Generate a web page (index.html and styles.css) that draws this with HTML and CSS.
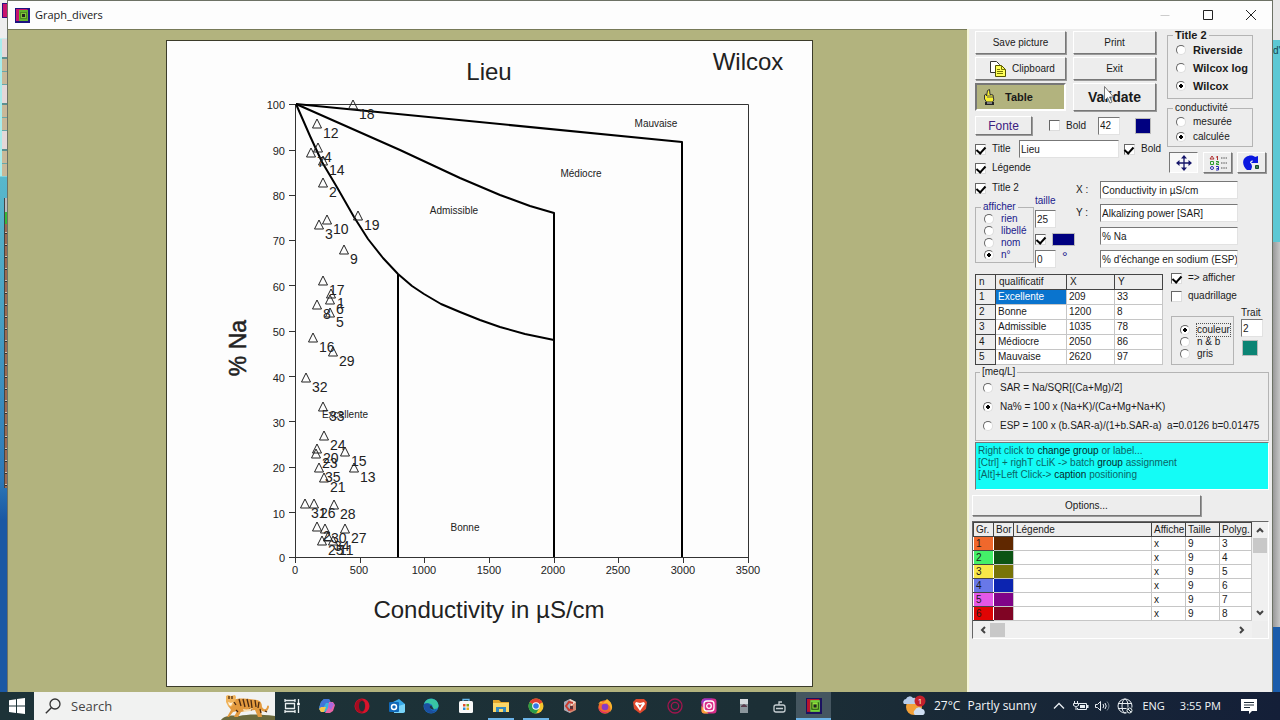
FILE: index.html
```html
<!DOCTYPE html>
<html lang="fr">
<head>
<meta charset="utf-8">
<title>Graph_divers</title>
<link rel="stylesheet" href="styles.css">
</head>
<body>
<div class="desktop">
  <div class="edge edge-left"><i class="edge-icon"></i><i class="cells-top"></i><i class="cells-low"></i></div>
  <div class="window">
    <header class="titlebar">
      <svg class="app-icon" viewBox="0 0 15 15"><rect width="15" height="15" fill="#1b1280"/><path d="M1 1h12L1 13z" fill="#c8146e"/><path d="M1 1h3v12H1z" fill="#c8146e"/><rect x="4" y="2" width="9" height="11" fill="#62b42c"/><rect x="5" y="4" width="7" height="7" fill="#4d8b22"/><rect x="6" y="5" width="5" height="5" fill="#82c43c"/><rect x="7" y="6" width="3" height="3" fill="#222"/></svg>
      <h1>Graph_divers</h1>
      <div class="win-buttons">
        <button aria-label="Minimize" class="dim"><svg viewBox="0 0 10 10"><path d="M0.500 5.500h9"/></svg></button>
        <button aria-label="Maximize"><svg viewBox="0 0 10 10"><path d="M.5.5h9v9h-9z"/></svg></button>
        <button aria-label="Close"><svg viewBox="0 0 10 10"><path d="M0 0l10 10M10 0L0 10"/></svg></button>
      </div>
    </header>
    <div class="content">
      <main class="canvas">
        <svg class="paper" viewBox="167 41 645 645" role="img" aria-label="Wilcox">
          <g class="axis">
            <path d="M295.500 104.500H748.500V557.500H295.500z"/>
            <path d="M289 104.500h6M289 150.500h6M289 195.500h6M289 240.500h6M289 285.500h6M289 331.500h6M289 376.500h6M289 421.500h6M289 467.500h6M289 512.500h6M289 557.500h6"/>
            <path d="M295.500 557v6M360.500 557v6M424.500 557v6M489.500 557v6M554.500 557v6M618.500 557v6M683.500 557v6M748.500 557v6"/>
          </g>
          <g class="bound">
            <path d="M296 104L682 142V557"/>
            <path d="M296 104L400 150L460 178L500 195L530 206L554 213V557"/>
            <path d="M296 104L310 136L322 162L338 189L354 217L368 239L383 258L398 274L412 286L424 294L441 304L460 312L480 320L500 327L525 334L554 340"/>
            <path d="M398 274V557"/>
          </g>
          <g class="ticks yt">
            <text x="285" y="109">100</text><text x="285" y="155">90</text><text x="285" y="200">80</text><text x="285" y="245">70</text><text x="285" y="291">60</text><text x="285" y="336">50</text><text x="285" y="382">40</text><text x="285" y="427">30</text><text x="285" y="472">20</text><text x="285" y="518">10</text><text x="285" y="562">0</text>
          </g>
          <g class="ticks xt">
            <text x="295" y="574">0</text><text x="359" y="574">500</text><text x="424" y="574">1000</text><text x="489" y="574">1500</text><text x="553" y="574">2000</text><text x="618" y="574">2500</text><text x="683" y="574">3000</text><text x="748" y="574">3500</text>
          </g>
          <g class="zones">
            <text x="656" y="127">Mauvaise</text><text x="581" y="177">Médiocre</text><text x="454" y="214">Admissible</text><text x="345" y="418">Excellente</text><text x="465" y="531">Bonne</text>
          </g>
          <g class="titles">
            <text x="489" y="80">Lieu</text><text x="748" y="70">Wilcox</text>
            <text x="489" y="618">Conductivity in µS/cm</text>
            <text class="side-title" transform="translate(246 348) rotate(-90)">% Na</text>
          </g>
          <g class="points" id="points"></g>
        </svg>
      </main>
      <aside class="panel">
        <section class="top">
          <div class="left">
            <div class="buttons">
              <button class="btn">Save picture</button><button class="btn">Print</button>
              <button class="btn with-icon"><svg width="16" height="16" viewBox="0 0 16 16"><path d="M.5.5h6l3 3v8h-9z" fill="#fff" stroke="#333"/><path d="M5.500 4.500h6l4 4v7h-10z" fill="#ffff58" stroke="#555500"/><path d="M11.500 4.500v4h4M7 8.500h3M7 10.500h6M7 12.500h6" fill="none" stroke="#777700"/></svg>Clipboard</button><button class="btn">Exit</button>
              <button class="btn tall pressed"><svg width="12" height="16" viewBox="0 0 12 16"><path d="M4.500 1.500l2-1 .5 5 3 .5.800 5-1.300 2h-6l-2-3v-4l1.500-1 .5 2z" fill="#f8f030" stroke="#333"/><path d="M5 6v3M7 6v3M9 7v2" stroke="#555"/><path d="M2 13h9v3H2z" fill="#222"/><path d="M4 14h5" stroke="#ddd"/></svg>Table</button>
              <button class="btn tall strong">Validate<svg class="pointer" width="10" height="18" viewBox="0 0 10 18"><path d="M.5.5v14l3-3 2.500 5.500 2-1-2.500-5h4z" fill="#fff" stroke="#777"/></svg></button>
            </div>
            <div class="row font-row">
              <button class="btn fonte">Fonte</button>
              <label class="check"><input type="checkbox">Bold</label>
              <input class="field size" value="42" aria-label="Taille de fonte">
              <button class="swatch navy" aria-label="Couleur"></button>
            </div>
            <div class="row title-row">
              <label class="check"><input type="checkbox" checked>Title</label>
              <input class="field" value="Lieu" aria-label="Title">
              <label class="check"><input type="checkbox" checked>Bold</label>
            </div>
            <label class="check legend-row"><input type="checkbox" checked>Légende</label>
          </div>
          <div class="right">
            <fieldset class="type"><legend>Title 2</legend>
              <label><input type="radio" name="type">Riverside</label>
              <label><input type="radio" name="type">Wilcox log</label>
              <label><input type="radio" name="type" checked>Wilcox</label>
            </fieldset>
            <fieldset class="cond"><legend>conductivité</legend>
              <label><input type="radio" name="cond">mesurée</label>
              <label><input type="radio" name="cond" checked>calculée</label>
            </fieldset>
            <div class="tools">
              <button class="btn on" aria-label="Déplacer"><svg width="16" height="16" viewBox="0 0 16 16"><path d="M8 2v12M2 8h12" stroke="#16166a" stroke-width="1.300"/><path d="M8 0l3 3.500H5zM8 16l3-3.500H5zM0 8l3.500-3v6zM16 8l-3.500-3v6z" fill="#16166a"/></svg></button>
              <button class="btn" aria-label="Liste"><svg width="18" height="16" viewBox="0 0 18 16"><path d="M3 1l2 3H1z" fill="none" stroke="#b03030"/><path d="M1.500 6.500h3v3h-3z" fill="none" stroke="#2c9a2c"/><circle cx="3" cy="13" r="1.500" fill="none" stroke="#2c2cb0"/><path d="M8.500 1v4M7 2h1" stroke="#b03030" fill="none"/><path d="M7 6.500h2.500v1.500H7.500v1.500H10" stroke="#2c9a2c" fill="none"/><path d="M7 11.500h2.500v3.500H7M7.500 13.500h2" stroke="#2c2cb0" fill="none"/><path d="M12 3h6M12 8h6M12 13h6" stroke="#555" stroke-dasharray="1.500 .8"/></svg></button>
              <button class="btn" aria-label="Rotation"><svg width="17" height="16" viewBox="0 0 17 16"><path d="M4 15C-1 11-1 4 3 2c3-2 7-2 9 0l3-1 0 7H8l2-2C9 5 7 6 7 8c1 0 2 2 2 4l-1 3z" fill="#0a18e0"/><path d="M12.500 10.500h3v3h-3z" fill="#3c8058" stroke="#184828"/></svg></button>
            </div>
          </div>
        </section>
        <section class="labels">
          <div class="label-opts">
            <label class="check"><input type="checkbox" checked>Title 2</label>
            <fieldset class="show"><legend>afficher</legend>
              <label><input type="radio" name="show">rien</label>
              <label><input type="radio" name="show">libellé</label>
              <label><input type="radio" name="show">nom</label>
              <label><input type="radio" name="show" checked>n°</label>
            </fieldset>
          </div>
          <div class="taille">
            <label for="taille">taille</label>
            <input class="field" id="taille" value="25">
            <div class="pair"><input type="checkbox" checked aria-label="Couleur des étiquettes"><button class="swatch navy flat" aria-label="Couleur étiquette"></button></div>
            <div class="pair"><input class="field" id="angle" value="0"><label for="angle" class="deg">°</label></div>
          </div>
          <div class="names">
            <label for="x">X :</label><input class="field" id="x" value="Conductivity in µS/cm">
            <label for="y">Y :</label><input class="field" id="y" value="Alkalizing power [SAR]">
            <input class="field" value="% Na" aria-label="Na">
            <input class="field" value="% d'échange en sodium (ESP)" aria-label="ESP">
          </div>
        </section>
        <section class="quali">
          <table class="grid">
            <thead><tr><th class="c1">n</th><th class="c2">qualificatif</th><th>X</th><th>Y</th></tr></thead>
            <tbody>
              <tr><th>1</th><td class="sel">Excellente</td><td>209</td><td>33</td></tr>
              <tr><th>2</th><td>Bonne</td><td>1200</td><td>8</td></tr>
              <tr><th>3</th><td>Admissible</td><td>1035</td><td>78</td></tr>
              <tr><th>4</th><td>Médiocre</td><td>2050</td><td>86</td></tr>
              <tr><th>5</th><td>Mauvaise</td><td>2620</td><td>97</td></tr>
            </tbody>
          </table>
          <div class="quali-opts">
            <label class="check"><input type="checkbox" checked>=&gt; afficher</label>
            <label class="check"><input type="checkbox">quadrillage</label>
            <div class="color-row">
              <fieldset class="mode">
                <label><input type="radio" name="mode" checked><span class="focus">couleur</span></label>
                <label><input type="radio" name="mode">n &amp; b</label>
                <label><input type="radio" name="mode">gris</label>
              </fieldset>
              <div class="trait"><label for="trait">Trait</label><input class="field" id="trait" value="2"><button class="swatch teal" aria-label="Couleur du trait"></button></div>
            </div>
          </div>
        </section>
        <fieldset class="formula"><legend>[meq/L]</legend>
          <label><input type="radio" name="f">SAR = Na/SQR[(Ca+Mg)/2]</label>
          <label><input type="radio" name="f" checked>Na% = 100 x (Na+K)/(Ca+Mg+Na+K)</label>
          <label><input type="radio" name="f">ESP = 100 x (b.SAR-a)/(1+b.SAR-a)&nbsp; a=0.0126 b=0.01475</label>
        </fieldset>
        <p class="hint">Right click to <span>change group</span> or label...<br>[Ctrl] + righT cLiK -&gt; batch <span>group</span> assignment<br>[Alt]+Left Click-&gt; <span>caption</span> positioning</p>
        <button class="btn options">Options...</button>
        <div class="groups">
          <table>
            <thead><tr><th class="g1">Gr.</th><th class="g2">Bor</th><th>Légende</th><th class="g4">Affiche</th><th class="g5">Taille</th><th class="g6">Polyg.</th></tr></thead>
            <tbody>
              <tr><th class="a1">1</th><td class="b1"></td><td></td><td>x</td><td>9</td><td>3</td></tr>
              <tr><th class="a2">2</th><td class="b2"></td><td></td><td>x</td><td>9</td><td>4</td></tr>
              <tr><th class="a3">3</th><td class="b3"></td><td></td><td>x</td><td>9</td><td>5</td></tr>
              <tr><th class="a4">4</th><td class="b4"></td><td></td><td>x</td><td>9</td><td>6</td></tr>
              <tr><th class="a5">5</th><td class="b5"></td><td></td><td>x</td><td>9</td><td>7</td></tr>
              <tr><th class="a6">6</th><td class="b6"></td><td></td><td>x</td><td>9</td><td>8</td></tr>
            </tbody>
          </table>
          <div class="vbar"><svg viewBox="0 0 8 6"><path d="M1 5l3-3 3 3"/></svg><i></i><svg viewBox="0 0 8 6"><path d="M1 1l3 3 3-3"/></svg></div>
          <div class="hbar"><svg viewBox="0 0 6 8"><path d="M5 1L2 4l3 3"/></svg><i></i><svg viewBox="0 0 6 8"><path d="M1 1l3 3-3 3"/></svg></div>
        </div>
      </aside>
    </div>
  </div>
  <div class="edge edge-right"><i class="e1"></i><i class="e2">d'</i><i class="e3"></i></div>
</div>
<footer class="taskbar">
  <button class="start" aria-label="Start"><svg width="16" height="16" viewBox="0 0 16 16"><path d="M0 2.200L7 1.200V7.600H0zM8 1.100L16 0V7.600H8zM0 8.500h7v6.400L0 13.900zM8 8.500h8V16L8 14.900z" fill="#fff"/></svg></button>
  <label class="search"><svg width="16" height="16" viewBox="0 0 16 16"><circle cx="10" cy="6" r="5" fill="none" stroke="#333" stroke-width="1.300"/><path d="M6.300 9.700L.8 15.200" stroke="#333" stroke-width="1.400"/></svg><input placeholder="Search" aria-label="Search">
    <svg class="tiger" width="56" height="26" viewBox="0 0 56 26"><path d="M2 26c4-5 12-5 18-4 10-2 20-2 36 0v4z" fill="#6b6a3d"/><path d="M14 6c8-3 18-1 24 0 4 1 5 4 5 7 2 3 4 3 5 0 0-2 2-2 2 0-1 5-5 6-8 3l1 7h-4l-3-7-9 1-5 1-3 5h-4l3-6-4 1-4 5H8l4-7c-1-2-2-3-3-4z" fill="#e39a3e"/><path d="M7 2l2-1 3 1 4-1 1 2-1 6-4 4-3-1-2-4z" fill="#f0b45c"/><path d="M9 8l3 1 2-1-2 4-2-1z" fill="#fff3dc"/><path d="M20 5l2 7M24 5l2 8M28 5l2 8M32 6l1 8M36 6l1 7M40 8l-1 6M10 2v3M13 2v3M17 16l2 2M30 15l3 1M46 17l2 1M15 8l2 3M41 15l1 4" stroke="#4b2a12" stroke-width="1.300"/><path d="M24 15c4 1 7 0 10-1l-3 3-6 1z" fill="#f8dfb4"/></svg></label>
  <nav class="apps">
    <button aria-label="Task view"><svg viewBox="0 0 16 16"><path d="M1 1v3M11 1v3M1 2.500h10M1 15v-3M11 15v-3M1 13.500h10M1.500 5.500h9v5h-9zM14.500 1v4M14.500 8v7" fill="none" stroke="#e8eeee" stroke-width="1.300"/><circle cx="14.500" cy="6" r="1.500" fill="#fff"/></svg></button>
    <button aria-label="Copilot"><svg viewBox="0 0 16 16"><path d="M5 1h5l2 4-4 8-2 1H2L0 10l2-6z" fill="#3bb4dd"/><path d="M5 1h5l2 4H7L3 12 0 10l2-6z" fill="#4374d8"/><path d="M10 4h4l2 3-2 6-3 2H6l3-5z" fill="#e965a7"/><path d="M2 9h5l-2 5H2L0 11z" fill="#f3c64c"/><path d="M9 8l3-4 3 2-3 6z" fill="#a868e0"/></svg></button>
    <button aria-label="Opera"><svg viewBox="0 0 16 16"><circle cx="8" cy="8" r="7.500" fill="#d8142c"/><path d="M8 1a7 7 0 0 0 0 14 9 9 0 0 0 0-14" fill="#a50c20"/><ellipse cx="8" cy="8" rx="3" ry="5.300" fill="#1d3035"/></svg></button>
    <button aria-label="Outlook"><svg viewBox="0 0 16 16"><path d="M4 4l6-3 6 5v8l-2 1H5z" fill="#37a8e8"/><path d="M6 9l10-3v8l-2 1H5z" fill="#78d3f7"/><rect y="4" width="10" height="10" rx="1" fill="#1068b8"/><circle cx="5" cy="9" r="2.500" fill="none" stroke="#fff" stroke-width="1.500"/></svg></button>
    <button aria-label="Edge"><svg viewBox="0 0 16 16"><circle cx="8" cy="8" r="7.500" fill="#1676c8"/><path d="M1 6c2-7 13-7 14.500 1 .5 3-2 4-5 4l-1-2c1-3-5-5-8.500-3z" fill="#39c5a4"/><path d="M1 6c4-2 7 0 6 3 0 3 3 5 7 3-3 5-12 4-13-3z" fill="#1c4fa0"/><path d="M8 7c-3 2 0 6 6 4l-3 .5z" fill="#22343c"/></svg></button>
    <button aria-label="Store"><svg viewBox="0 0 16 16"><path d="M5 4V1.500h6V4" fill="none" stroke="#65b8ec" stroke-width="1.300"/><rect x="1" y="3" width="14" height="12" rx="1.500" fill="#f8f8f8"/><path d="M5 6h2.500v2.500H5z" fill="#e05030"/><path d="M8.500 6H11v2.500H8.500z" fill="#78a820"/><path d="M5 9.500h2.500V12H5z" fill="#2890d8"/><path d="M8.500 9.500H11V12H8.500z" fill="#e8b020"/></svg></button>
    <button class="open" aria-label="Explorer"><svg viewBox="0 0 16 16"><path d="M0 2h6l2 2h8v10H0z" fill="#e3a62c"/><path d="M0 5h16v9H0z" fill="#fbd769"/><path d="M3 14V9h10v5h-3v-3H6v3z" fill="#348ac0"/></svg></button>
    <button class="open" aria-label="Chrome"><svg viewBox="0 0 16 16"><circle cx="8" cy="8" r="7.500" fill="#f5c52d"/><path d="M8 8L1.500 4.200a7.500 7.500 0 0 1 13 0z" fill="#e04030"/><path d="M8 8L1.500 4.200A7.500 7.500 0 0 0 8 15.500l3-5z" fill="#299d48"/><circle cx="8" cy="8" r="3.800" fill="#fff"/><circle cx="8" cy="8" r="2.800" fill="#3578e5"/></svg></button>
    <button aria-label="Cube"><svg viewBox="0 0 16 16"><path d="M8 1l6 3v8l-6 3-6-3V4z" fill="#d58a74"/><path d="M8 1l6 3-5 4z" fill="#efe0d4"/><path d="M2 4l6-3v14l-6-3z" fill="#a6a9b8"/><path d="M11 5L7 4 4 8l3 4 4-1" fill="none" stroke="#c93c30" stroke-width="2"/><path d="M8 8h3v3H8z" fill="#5a3038"/></svg></button>
    <button aria-label="Firefox"><svg viewBox="0 0 16 16"><circle cx="8" cy="9" r="6.700" fill="#f36c2c"/><path d="M1 6l3-3 2 2 4-4c5 3 7 9 3 13 2-6-2-7-3-9C8 7 4 4 1 6z" fill="#fbb42c"/><circle cx="8" cy="9" r="3.300" fill="#883bc6"/><path d="M1.500 9c2 5 7 6 11 4-4 4-11 2-11-4z" fill="#e32c68"/></svg></button>
    <button aria-label="Brave"><svg viewBox="0 0 16 16"><path d="M4 1h8l3 3-1 7-6 4.500L2 11 1 4z" fill="#e0482c"/><path d="M4 4l4 1 4-1 1 2-3 4-2 3-2-3-3-4z" fill="#fff"/><path d="M6 6l2 1 2-1-2 4z" fill="#e0482c"/></svg></button>
    <button aria-label="Opera GX"><svg viewBox="0 0 16 16"><circle cx="8" cy="8" r="7" fill="none" stroke="#a0164e" stroke-width="1.300"/><circle cx="8" cy="8" r="3.700" fill="none" stroke="#a0164e" stroke-width="1.300"/></svg></button>
    <button aria-label="Instagram"><svg viewBox="0 0 16 16"><rect x=".5" y=".5" width="15" height="15" rx="3" fill="#d82c88"/><path d="M.5 8l7 7.500H3.500a3 3 0 0 1-3-3z" fill="#f8a038"/><path d="M3 .5h9L.5 6V3.500z" fill="#9b35c6"/><rect x="3" y="3" width="10" height="10" rx="3" fill="none" stroke="#fff" stroke-width="1.300"/><circle cx="8" cy="8" r="2.300" fill="none" stroke="#fff" stroke-width="1.300"/></svg></button>
    <button aria-label="Device"><svg viewBox="0 0 16 16"><path d="M4 1h8v14H4z" fill="#8b969c"/><path d="M4 1h8v5H4z" fill="#d5dadd"/><path d="M5 8l3-2 3 2v1H5z" fill="#5c3d4d"/></svg></button>
    <button aria-label="Radio"><svg viewBox="0 0 16 16"><rect x="3" y="7" width="11" height="7" rx="2" fill="none" stroke="#c6ced2" stroke-width="1.300"/><path d="M5 10.500h7M8 7V4h3" stroke="#c6ced2" stroke-width="1.300" fill="none"/></svg></button>
    <button class="open active" aria-label="Graph_divers"><svg viewBox="0 0 15 15"><rect width="15" height="15" fill="#1b1260"/><path d="M1 1h12L1 13z" fill="#b8142e"/><path d="M1 1h3v12H1z" fill="#b8142e"/><rect x="4" y="2" width="9" height="11" fill="#72d43c"/><rect x="5" y="4" width="7" height="7" fill="#23490e"/><rect x="6" y="4" width="5" height="6" fill="#92e43c"/><rect x="7" y="6" width="3" height="3" fill="#222"/></svg></button>
  </nav>
  <div class="tray">
    <button class="weather"><svg width="24" height="22" viewBox="0 0 24 22"><circle cx="11" cy="12" r="8" fill="#f2a038"/><path d="M1 9a3 3 0 0 1 2-5 4 4 0 0 1 7-1 3 3 0 0 1 2 6z" fill="#b9cdea"/><path d="M12 20a3 3 0 0 1 0-5 4 4 0 0 1 7-1c3 0 4 5 1 6z" fill="#cfdef2"/><circle cx="17" cy="6" r="5.500" fill="#c4202c"/><text x="17" y="9">1</text></svg><span>27°C</span><span>Partly sunny</span></button>
    <button class="ti" aria-label="More"><svg width="12" height="12" viewBox="0 0 12 12"><path d="M1 8.500l5-5 5 5" fill="none" stroke="#e8edf2" stroke-width="1.300"/></svg></button>
    <button class="ti" aria-label="Battery"><svg width="16" height="12" viewBox="0 0 16 12"><path d="M5.500 3.500h8v6h-9V8" fill="none" stroke="#e8edf2"/><path d="M7 5h5v3H7zM14 5h1.500v3H14z" fill="#e8edf2"/><path d="M1.500 1v2M4.500 1v2M.5 3.500h5v2l-2 1h-1l-2-1zM3 6v4" fill="none" stroke="#e8edf2"/></svg></button>
    <button class="ti" aria-label="Volume"><svg width="16" height="12" viewBox="0 0 16 12"><path d="M.5 4.500h2l3-3v9l-3-3h-2z" fill="none" stroke="#e8edf2"/><path d="M8 4q1.500 2 0 4M10 3q2.500 3 0 6" fill="none" stroke="#e8edf2"/><path d="M12 1.500q4 4.500 0 9" fill="none" stroke="#76828e"/></svg></button>
    <button class="ti" aria-label="Network"><svg width="16" height="16" viewBox="0 0 16 16"><circle cx="8" cy="8" r="7" fill="none" stroke="#e8edf2"/><ellipse cx="8" cy="8" rx="3" ry="7" fill="none" stroke="#e8edf2"/><path d="M1 5.500h14M1 10.500h14" stroke="#e8edf2"/><circle cx="12.500" cy="12.500" r="3.500" fill="#1a2936"/><circle cx="12.500" cy="12.500" r="2.500" fill="none" stroke="#e8edf2"/><path d="M11 11l3 3" stroke="#e8edf2"/></svg></button>
    <button class="lang">ENG</button>
    <time>3:55 PM</time>
    <button class="ti" aria-label="Notifications"><svg width="16" height="16" viewBox="0 0 16 16"><path d="M0 1h16v12h-5l-3 3v-3H0z" fill="#fff"/><path d="M3 4.500h10M3 7h10M3 9.500h6" stroke="#1a2936"/></svg></button>
  </div>
</footer>
<script src="points.js"></script>
</body>
</html>
```
FILE: points.js
```js
// Samples: marker x, marker y, label
const samples = [
  [353,105,'18'],[317,124,'12'],[318,148,'4'],[311,153,'7'],[323,161,'14'],[323,183,'2'],
  [327,220,'10'],[319,225,'3'],[344,250,'9'],[358,216,'19'],[323,281,'17'],[331,294,'1'],
  [330,300,'6'],[317,305,'8'],[330,313,'5'],[313,338,'16'],[333,352,'29'],[306,378,'32'],
  [323,407,'33'],[324,436,'24'],[317,449,'20'],[316,454,'23'],[345,452,'15'],[354,468,'13'],
  [319,468,'35'],[324,478,'21'],[305,504,'31'],[314,504,'26'],[334,505,'28'],[317,527,'2'],
  [325,529,'30'],[345,529,'27'],[322,541,'25'],[328,537,'34'],[333,541,'11']
];
const ns = 'http://www.w3.org/2000/svg';
const layer = document.getElementById('points');
for (const [x, y, name] of samples) {
  const mark = document.createElementNS(ns, 'path');
  mark.setAttribute('d', `M${x} ${y - 5}l4.500 9h-9z`);
  const text = document.createElementNS(ns, 'text');
  text.setAttribute('x', x + 6);
  text.setAttribute('y', y + 14);
  text.textContent = name;
  layer.append(mark, text);
}
```
FILE: styles.css
```css
* { box-sizing: border-box; }
body { margin: 0; height: 100vh; display: flex; flex-direction: column; overflow: hidden; font: 10px/14px "Liberation Sans", Arial, sans-serif; color: #1a1a1a; }
button, input { font: inherit; color: inherit; margin: 0; padding: 0; }
button { background: none; border: 0; }
svg { display: block; flex: none; }

.desktop { flex: 1; min-height: 0; display: flex; }
.edge { width: 7px; flex: none; display: flex; flex-direction: column; overflow: hidden; }
.edge i { font-style: normal; flex: none; }
.edge-left { background: linear-gradient(#eee 0 38px, #a8ecec 39px 176px, #58b8cc 177px, #4aa4c4 300px, #2c78b8 480px, #1a58a4 520px); }
.edge-icon { width: 6px; height: 15px; margin: 3px 0 21px 2px; background: #c8146e; border: 1px solid #301080; }
.cells-top { height: 137px; margin-left: 2px; background: repeating-linear-gradient(#e4d8d8 0 18px, #5c9090 18px 20px, #c8b898 20px 32px, #68a8a8 32px 33px, #c8b898 33px 45px, #68a8a8 45px 46px); }
.cells-low { height: 290px; margin: 22px 0 0 4px; background: linear-gradient(90deg, #444 1px, transparent 1px), linear-gradient(#bbb 14px, #38b838 14px 26px, transparent 26px), repeating-linear-gradient(#9c6a50 0 10px, #d0c0b0 10px 11px, #333 11px 12px); }
.edge-right { background: #1a5cab; }
.e1 { height: 40px; background: #e8e8e8; }
.e2 { height: 202px; background: #5cc8d4; color: #15464c; padding-top: 4px; }
.e3 { height: 385px; background: linear-gradient(90deg, #999, #c5c5c5); }

.window { flex: 1; min-width: 0; display: flex; flex-direction: column; border: solid #6d7265; border-width: 1px 1px 0; }
.titlebar { height: 28px; display: flex; align-items: center; gap: 5px; padding-left: 7px; background: #fdfdfd; }
.app-icon { width: 15px; height: 15px; }
.titlebar h1 { margin: 0; font: 11px/14px "Open Sans", sans-serif; flex: 1; }
.win-buttons { display: flex; }
.win-buttons button { width: 43px; height: 26px; display: grid; place-items: center; }
.win-buttons svg { width: 10px; height: 10px; fill: none; stroke: #222; }
.win-buttons .dim svg { stroke: #ccc; }

.content { flex: 1; min-height: 0; display: flex; }
.canvas { flex: 1; min-width: 0; background: #b2b37e; border-top: 1px solid #777a58; padding: 10px 0 5px 4px; display: flex; justify-content: center; }
.paper { height: 100%; aspect-ratio: 1; background: #fdfdfd; border: 1px solid #3c3c2a; }
.paper text { fill: #222; }
.axis path { fill: none; stroke: #333; stroke-width: 1; }
.bound path { fill: none; stroke: #000; stroke-width: 2; stroke-linejoin: round; }
.ticks { font-size: 11px; }
.yt { text-anchor: end; }
.xt, .zones, .titles { text-anchor: middle; }
.zones { font-size: 10px; }
.titles { font-size: 24px; }
.titles .side-title { font-size: 23px; stroke: #222; stroke-width: .5; }
.points { font-size: 14px; }
.points path { fill: none; stroke: #222; stroke-width: 1; }

.panel { width: 305px; flex: none; background: #ededed; border-left: 2px solid #f6f6d8; padding: 0 3px 0 6px; }
.btn { border: 1px solid; border-color: #fff #777 #777 #fff; box-shadow: 1px 1px 0 #999; background: #ededed; position: relative; display: flex; align-items: center; justify-content: center; }
.field { height: 18px; min-width: 0; width: 100%; border: 1px solid; border-color: #777 #e2e2e2 #e2e2e2 #777; background: #fff; padding: 0 0 0 1px; outline: 0; }
fieldset { margin: 0; padding: 0; min-width: 0; border: 1px solid #b4b4b4; }
fieldset label { display: flex; align-items: center; gap: 7px; white-space: nowrap; }
legend { padding: 0 2px; margin-left: 5px; line-height: 12px; }
.check { display: flex; align-items: center; gap: 6px; white-space: nowrap; }
input[type=checkbox], input[type=radio] { appearance: none; flex: none; width: 11px; height: 11px; border: 1px solid; border-color: #666 #ddd #ddd #666; background: #fff; display: grid; place-items: center; }
input[type=radio] { width: 10px; height: 10px; border-radius: 50%; }
input[type=radio]:checked { background: radial-gradient(circle, #000 0 2px, #fff 2px); }
input[type=checkbox]:checked::after { content: ""; width: 4px; height: 7px; border: solid #000; border-width: 0 2px 2px 0; transform: rotate(42deg); margin-bottom: 2px; }
.swatch { border: 1px solid #bbb; height: 16px; width: 16px; flex: none; }
.navy { background: #000080; }
.teal { background: #0c8474; }

.top { display: flex; gap: 11px; }
.left { width: 181px; flex: none; padding-top: 2px; }
.buttons { display: grid; grid-template-columns: 91px 83px; gap: 3px 7px; }
.buttons .btn { height: 23px; }
.buttons .tall { height: 28px; }
.with-icon { gap: 6px; padding-left: 4px; }
.buttons .pressed { background: #b2b37e; border: 2px solid; border-color: #777 #fff #fff #777; box-shadow: none; font-weight: bold; font-size: 11px; justify-content: flex-start; gap: 10px; padding-left: 6px; }
.strong { font-weight: bold; font-size: 14px; }
.pointer { position: absolute; left: 30px; top: 2px; }
.row { display: flex; align-items: center; }
.font-row { padding-top: 5px; }
.fonte { width: 57px; height: 19px; color: #3c2080; font-size: 12px; margin-right: 17px; }
.font-row .size { width: 22px; margin: 0 15px 0 12px; }
.title-row { padding-top: 5px; gap: 5px; width: 186px; }
.title-row .check:first-child { width: 39px; flex: none; }
.legend-row { padding-top: 3px; }
.right { flex: 1; }
.right fieldset { width: 86px; padding-left: 8px; }
.type { font-weight: bold; font-size: 11px; padding-bottom: 3px; }
.type legend, .cond legend { margin-left: -3px; }
.type label { height: 18px; }
.right .cond { margin-top: 3px; padding-bottom: 2px; }
.cond label { height: 15px; }
.tools { display: flex; gap: 5px; padding: 5px 0 0 2px; }
.tools .btn { width: 29px; height: 21px; }
.tools .on { border-color: #777 #fff #fff #777; box-shadow: none; background: #f8f8f8; }

.labels { display: flex; padding-top: 6px; }
.label-opts { width: 59px; flex: none; }
.show { color: #20208c; padding: 0 0 1px 8px; }
.show legend { margin-left: -3px; }
.label-opts .show { margin-top: 6px; }
.show label { height: 12px; }
.taille { width: 42px; flex: none; padding: 13px 0 0 1px; color: #20208c; display: flex; flex-direction: column; gap: 2px; }
.taille .field { width: 21px; color: #222; }
.pair { display: flex; gap: 6px; align-items: center; height: 18px; }
.deg { align-self: flex-start; font-size: 14px; }
.flat { width: 23px; height: 13px; }
.names { width: 162px; display: grid; grid-template-columns: 18px 138px; gap: 5px 6px; align-items: center; align-content: start; }
.names .field { grid-column: 2; }

.quali { display: flex; gap: 8px; padding-top: 3px; }
table { border-collapse: collapse; table-layout: fixed; background: #fff; }
th { font-weight: normal; text-align: left; background: #ededed; border: 1px solid #444; padding: 0 0 0 3px; }
td { border: 1px solid #c6c6c6; padding: 0 0 0 2px; }
.grid { width: 188px; flex: none; margin-top: 3px; }
.grid th, .grid td { height: 15px; line-height: 14px; }
.c1 { width: 20px; }
.c2 { width: 71px; }
.sel { background: #0a74ce; color: #fff; }
.quali-opts { display: flex; flex-direction: column; }
.quali-opts .check { height: 14px; margin-bottom: 4px; }
.color-row { display: flex; gap: 7px; }
.mode { width: 63px; padding: 7px 0 4px 8px; }
.mode label { height: 12px; line-height: 12px; }
.quali-opts .mode { margin-top: 9px; }
.focus { outline: 1px dotted #555; }
.trait { width: 22px; display: flex; flex-direction: column; line-height: 12px; }
.trait .swatch { margin: 3px 0 0 1px; }

.formula { padding: 0 0 5px 7px; margin-top: 1px; }
.formula legend { margin-left: -3px; }
.formula label { height: 19px; }
.hint { margin: 1px 0 0; height: 48px; background: #14fcf6; border: 1px solid; border-color: #777 #fff #fff #777; padding: 2px; line-height: 12px; color: #0a6666; }
.hint span { color: #052a2a; }
.options { width: 229px; height: 21px; margin: 5px 0 0 -3px; }
.groups { margin: 5px 0 0 -3px; border: 1px solid; border-color: #666 #fff #fff #666; display: grid; grid-template-columns: 1fr 16px; grid-template-rows: auto 17px; }
.groups table { width: 100%; }
.groups th, .groups td { height: 14px; line-height: 13px; padding-left: 2px; overflow: hidden; white-space: nowrap; }
.g1, .g2 { width: 20px; }
.g4, .g5 { width: 34px; }
.g6 { width: 32px; }
.groups tbody th { border-color: #444 #fff #444 #fff; }
.a1 { background: #f0682c; } .b1 { background: #602800; }
.a2 { background: #44f068; } .b2 { background: #0c5414; }
.a3 { background: #f8e848; } .b3 { background: #787408; }
.a4 { background: #6878e8; } .b4 { background: #0c24b0; }
.a5 { background: #e458e8; } .b5 { background: #800488; }
.a6 { background: #e00404; } .b6 { background: #800424; }
.vbar, .hbar { display: flex; align-items: center; background: #f0f0f0; }
.vbar { flex-direction: column; padding: 4px 0; }
.hbar { padding: 0 6px; }
.vbar svg, .hbar svg { width: 8px; height: 8px; fill: none; stroke: #444; stroke-width: 2; }
.vbar i { width: 14px; height: 15px; background: #c8c8c8; margin: 4px 0 auto; }
.hbar i { width: 15px; height: 14px; background: #c8c8c8; margin: 0 auto 0 3px; }

.taskbar { height: 28px; flex: none; display: flex; background: linear-gradient(90deg, #1d3338, #1c2f36 60%, #141f38); color: #f2f5f7; font: 12px/16px "Open Sans", "Noto Sans", sans-serif; }
.start { width: 34px; display: grid; place-items: center; }
.search { width: 241px; display: flex; align-items: center; gap: 10px; background: #f1f2f1; color: #333; padding-left: 11px; }
.search input { flex: 1; min-width: 0; border: 0; background: none; outline: 0; font-size: 13px; }
.search input::placeholder { color: #444; }
.tiger { align-self: flex-end; }
.apps { display: flex; width: 556px; }
.apps button { flex: 1; display: grid; place-items: center; }
.apps svg { width: 16px; height: 16px; }
.apps .open { background: linear-gradient(#6cb4e8, #6cb4e8) bottom / 26px 2px no-repeat; }
.apps .active { background: linear-gradient(transparent 26px, #6cb4e8 26px), #455660; }
.tray { margin-left: auto; display: flex; align-items: center; padding-right: 20px; }
.weather { display: flex; align-items: center; gap: 7px; margin-right: 12px; }
.weather text { font-size: 8px; fill: #fff; text-anchor: middle; }
.ti { width: 22px; display: grid; place-items: center; }
.lang, .tray time { font-size: 11px; }
.lang { margin: 0 15px 0 6px; }
.tray time { margin-right: 17px; }
```
